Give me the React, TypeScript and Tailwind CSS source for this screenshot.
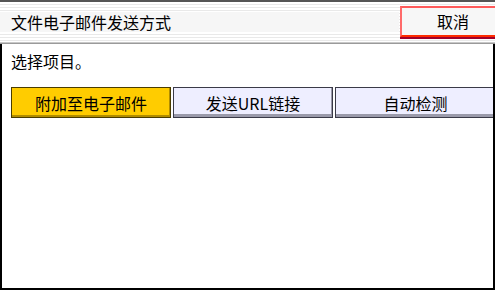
import React from "react";

const font = { fontFamily: '"Noto Sans CJK SC", "Noto Sans", sans-serif' };

export default function App() {
  return (
    <div
      className="w-[495px] h-[290px] bg-white overflow-hidden flex flex-col text-black text-[16px] leading-[20px]"
      style={font}
    >
      <div className="h-[2px] bg-[#555555]" />
      <div className="h-[40px] flex items-center bg-[repeating-linear-gradient(to_bottom,#ffffff_0px,#ffffff_2px,#e9e9e9_2px,#e9e9e9_3px)]">
        <div className="flex-1 h-[20px] bg-[#f6f6f6] flex items-center pl-[11px]">
          文件电子邮件发送方式
        </div>
        <div className="ml-[1px] w-[106px] shrink-0 h-[31px] flex items-center justify-center bg-[#f7f7f7] border-2 border-[#ff2a00] border-t-[#ff5a5a] border-l-[#ff6a6a] shadow-[0_2px_0_#a0002a] -mr-[11px] mb-[2px]">
          取消
        </div>
      </div>
      <div className="h-[2px] bg-[#9a9a9a] border-t border-[#c8c8c8]" />
      <div className="flex-1 border-l-2 border-r-2 border-b-2 border-black flex flex-col">
        <div className="pl-[9px] pt-[7px]">选择项目。</div>
        <div className="flex gap-[2px] pl-[9px] mt-[16px]">
          <div className="w-[160px] h-[31px] flex items-center justify-center bg-[#ffcc00] border border-[#4a3c00] shadow-[inset_0_-2px_0_#b08c00,inset_-1px_0_0_#b08c00]">
            附加至电子邮件
          </div>
          <div className="w-[160px] h-[31px] flex items-center justify-center bg-[#eeeeff] border border-[#3a3a48] shadow-[inset_0_-3px_0_#9a9aaa,inset_-1px_0_0_#9a9aaa]">
            发送URL链接
          </div>
          <div className="w-[158px] h-[31px] flex items-center justify-center pl-[2px] bg-[#eeeeff] border border-r-0 border-[#3a3a48] shadow-[inset_0_-3px_0_#9a9aaa]">
            自动检测
          </div>
        </div>
      </div>
    </div>
  );
}
